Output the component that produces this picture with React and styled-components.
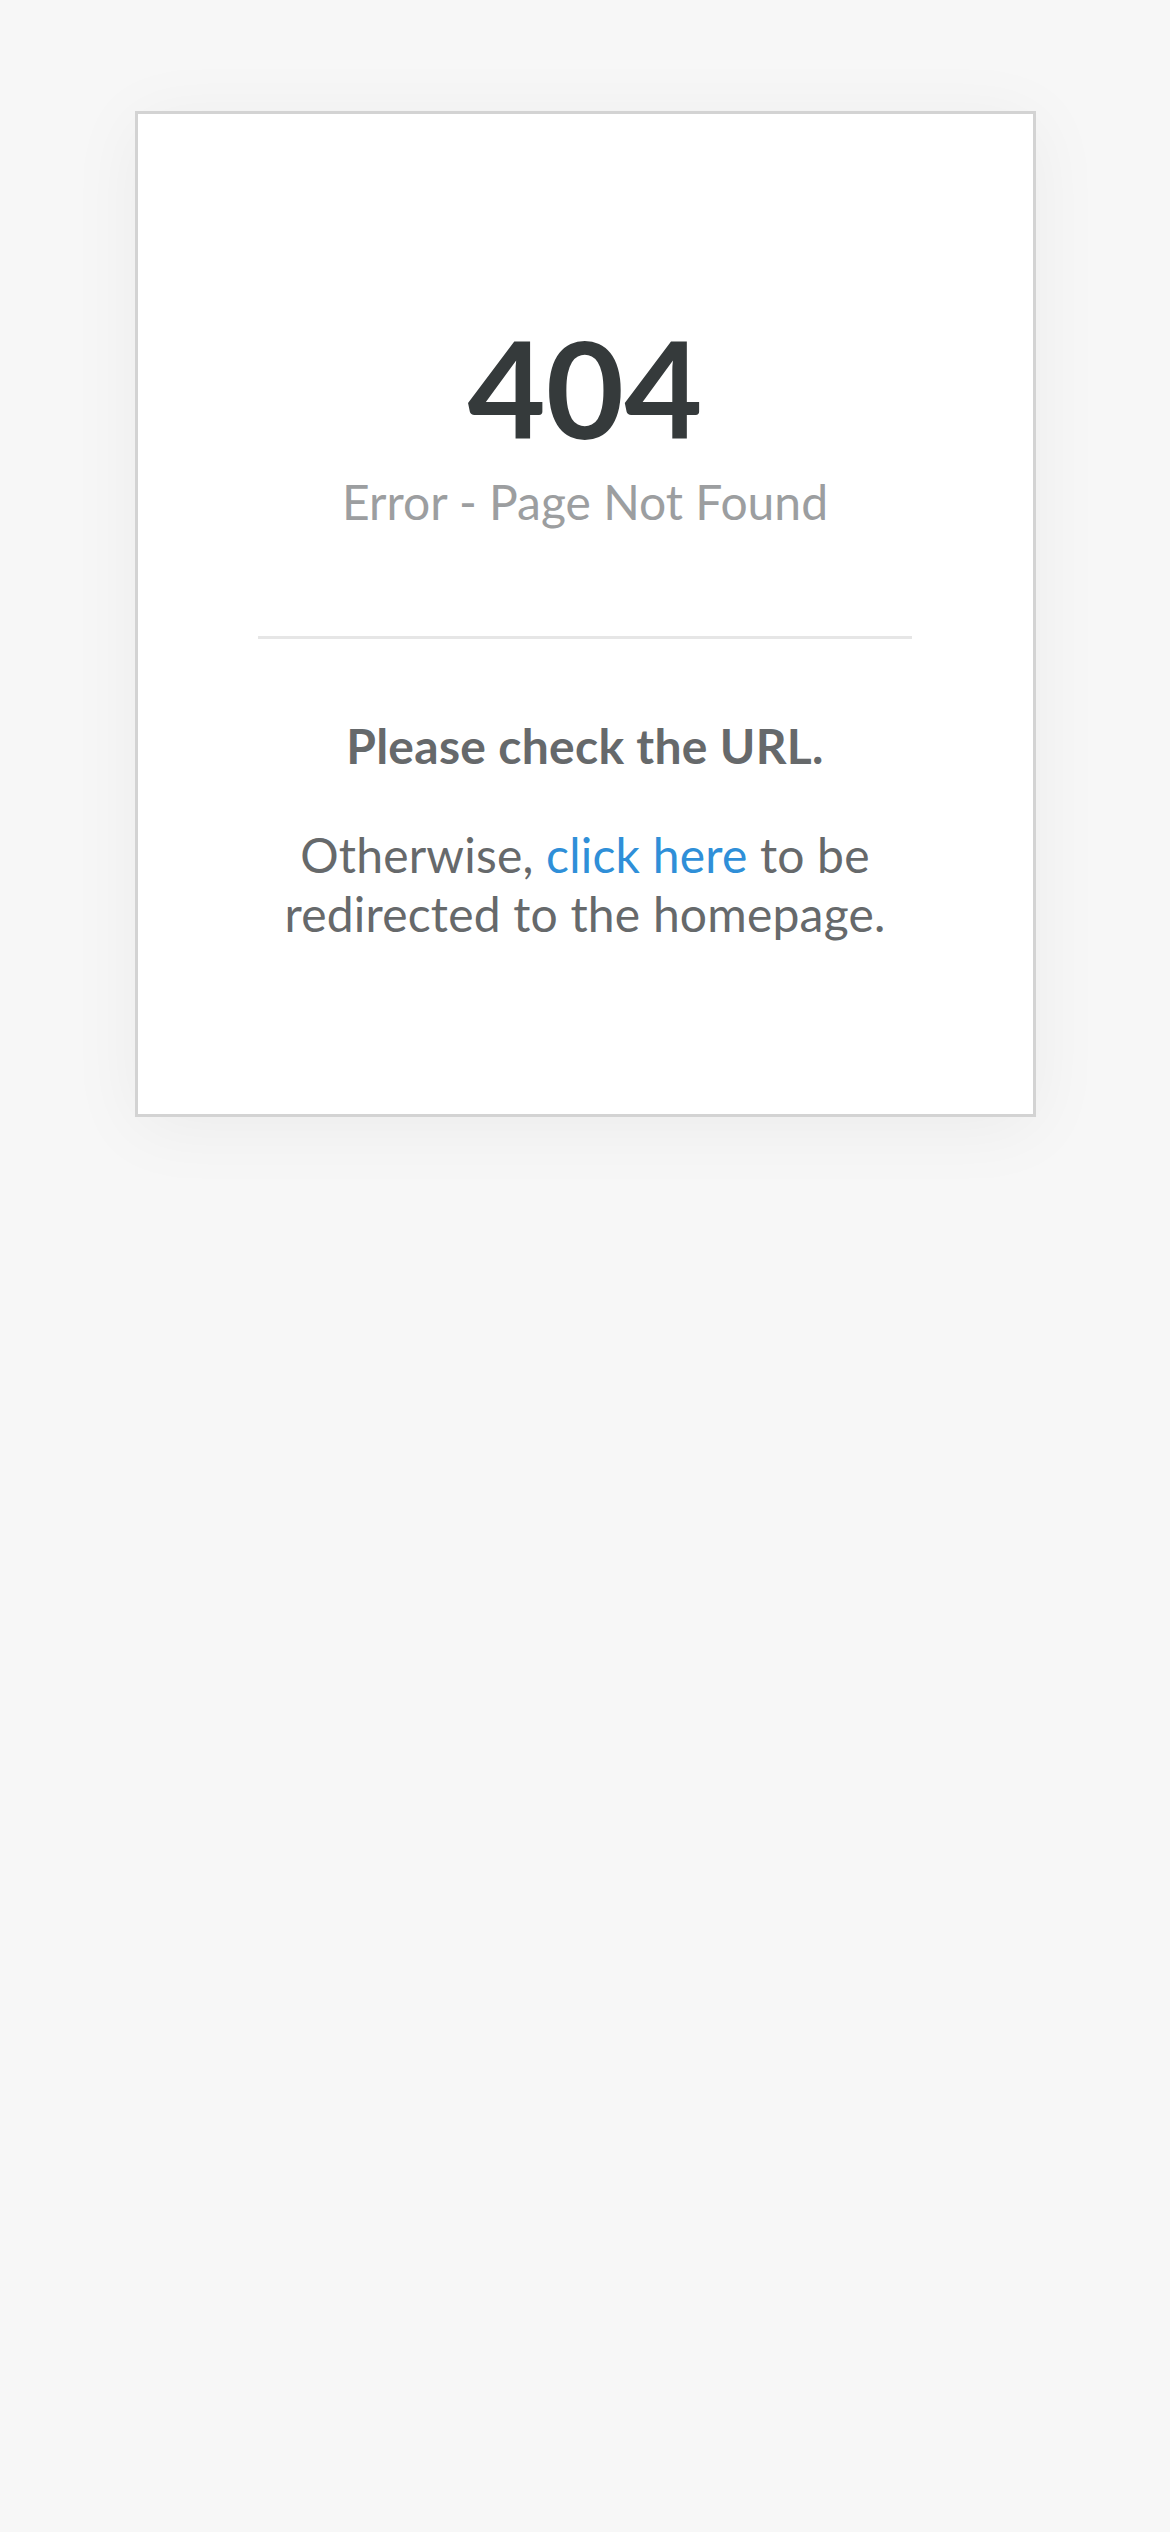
import React from 'react';
import styled, { createGlobalStyle } from 'styled-components';

const GlobalStyle = createGlobalStyle`
  html, body {
    margin: 0;
    padding: 0;
    background: #f7f7f7;
  }
  body {
    font-family: Lato, "Open Sans", Arial, sans-serif;
    min-height: 2532px;
  }
`;

const App = () => {
  return (
    <>
      <GlobalStyle />
      <Page>
        <Card>
          <Code>404</Code>
          <Subtitle>Error - Page Not Found</Subtitle>
          <Divider />
          <Hint>Please check the URL.</Hint>
          <Message>
            Otherwise, <Link href="#">click here</Link> to be
            <br />
            redirected to the homepage.
          </Message>
        </Card>
      </Page>
    </>
  );
};

const Page = styled.div`
  padding-top: 111px;
  display: flex;
  justify-content: center;
`;

const Card = styled.div`
  box-sizing: border-box;
  width: 901px;
  background: #fff;
  border: 3px solid #d3d3d3;
  box-shadow: 0 10px 70px rgba(0, 0, 0, 0.05);
  padding: 206px 60px 171px;
  display: flex;
  flex-direction: column;
  align-items: center;
  text-align: center;
`;

const Code = styled.h1`
  margin: 0;
  font-size: 135px;
  line-height: 1;
  font-weight: 700;
  color: #353a3b;
`;

const Subtitle = styled.div`
  margin-top: 18px;
  font-size: 48px;
  line-height: 1.2;
  color: #9c9ea0;
`;

const Divider = styled.hr`
  width: 654px;
  height: 3px;
  border: 0;
  margin: 105px 0 0;
  background: #e6e6e6;
`;

const Hint = styled.div`
  margin-top: 78px;
  font-size: 48px;
  line-height: 1.2;
  font-weight: 700;
  letter-spacing: 0.3px;
  color: #66696b;
`;

const Message = styled.p`
  margin: 51px 0 0;
  font-size: 48px;
  line-height: 59px;
  letter-spacing: 0.2px;
  color: #66696b;
`;

const Link = styled.a`
  color: #2f8fd8;
  text-decoration: none;
`;

export default App;
